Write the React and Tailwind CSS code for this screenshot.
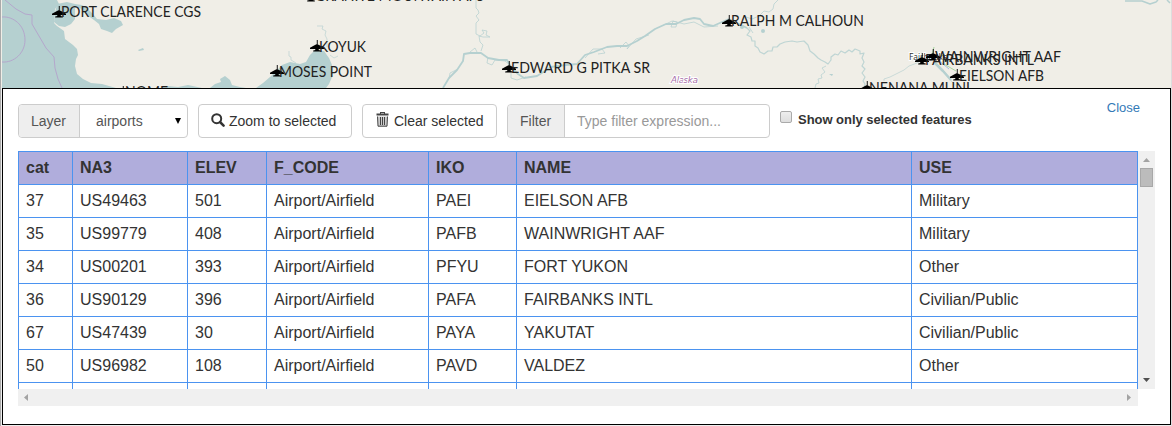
const columns = ['cat', 'NA3', 'ELEV', 'F_CODE', 'IKO', 'NAME', 'USE'];

const rows = [
  ['37', 'US49463', '501', 'Airport/Airfield', 'PAEI', 'EIELSON AFB', 'Military'],
  ['35', 'US99779', '408', 'Airport/Airfield', 'PAFB', 'WAINWRIGHT AAF', 'Military'],
  ['34', 'US00201', '393', 'Airport/Airfield', 'PFYU', 'FORT YUKON', 'Other'],
  ['36', 'US90129', '396', 'Airport/Airfield', 'PAFA', 'FAIRBANKS INTL', 'Civilian/Public'],
  ['67', 'US47439', '30', 'Airport/Airfield', 'PAYA', 'YAKUTAT', 'Civilian/Public'],
  ['50', 'US96982', '108', 'Airport/Airfield', 'PAVD', 'VALDEZ', 'Other'],
  ['', '', '', '', '', '', ''],
];

// x / y: centre of the plane marker; tx / ty: label origin; w: label width
const airports = [
  { name: 'PORT CLARENCE CGS', x: 59, y: 13, tx: 61, ty: 17, w: 140 },
  { name: 'GRANITE MOUNTAIN AFS', x: 311, y: -3, tx: 315, ty: 1, w: 169 },
  { name: 'KOYUK', x: 317, y: 47, tx: 319, ty: 52, w: 47 },
  { name: 'MOSES POINT', x: 277, y: 72, tx: 279, ty: 77, w: 93 },
  { name: 'NOME', x: 123, y: 93, tx: 125, ty: 97, w: 43 },
  { name: 'EDWARD G PITKA SR', x: 509, y: 68, tx: 511, ty: 73, w: 139 },
  { name: 'RALPH M CALHOUN', x: 729, y: 22, tx: 731, ty: 26, w: 133 },
  { name: 'NENANA MUNI', x: 867, y: 88, tx: 869, ty: 93, w: 101 },
  { name: 'FAIRBANKS INTL', x: 922, y: 60, tx: 925, ty: 65, w: 109 },
  { name: 'WAINWRIGHT AAF', x: 933, y: 56, tx: 935, ty: 62, w: 126 },
  { name: 'EIELSON AFB', x: 957, y: 76, tx: 959, ty: 81, w: 85 },
];

function MapView() {
  return (
    <svg className="block h-[88px] w-[1170px]" viewBox="1 0 1170 88">
      <rect x="1" width="1170" height="88" fill="#f0eee7" />
      <g fill="#b5d0d0">
        <path d="M2 0H57L59 4L55 9L54 23L57 26L64 31L65 39L73 45L77 49L78 55L76 59L75 66L77 74L83 79L91 83L102 84L116 88H2Z" />
        <path d="M57 4L67 2L75 4L82 5L88 9L93 14L97 19L106 20L114 18L121 21L123 25L116 29L112 33L107 31L101 29L99 24L94 20L87 15L80 8L75 8L75 19L71 24L65 27L59 26L54 22L55 13Z" />
        <path d="M160 88L168 86L178 87L188 85L202 88Z" />
        <path d="M215 84L221 82L220 79L225 76L230 80L232 85L240 87L246 88H210Z" />
        <path d="M256 88L263 83L270 77L277 70L282 65L290 62L300 64L306 62L310 55L314 51L324 51L329 58L332 65L332 77L329 84L326 88Z" />
        <circle cx="763" cy="31" r="2" />
        <circle cx="742" cy="27" r="2" />
        <path d="M138 50L143 48L144 50L139 51ZM829 74L833 74L832 76Z" />
      </g>
      <g fill="none" stroke="#b5d0d0" strokeLinejoin="round">
        <path strokeWidth="1.8" d="M443 88L449 78L457 70L463 61L464 54L470 53L481 53L488 58L499 60L507 60L511 67L518 74L524 78L537 76L551 67L566 65L577 64L585 55L594 52L607 47L617 46L627 46L637 41L645 36L655 29L666 24L676 24L684 20L694 18L700 19L704 24L713 26L722 22L729 19L739 24L747 28" />
        <path strokeWidth="1.2" strokeOpacity=".85" d="M747 28L750 31L747 35L751 37L752 41L755 41L755 46L758 48L760 52L764 54L768 51L772 51L773 47L777 47L780 44L785 42L792 41L797 42L804 41L808 45L810 51L814 54L818 58L821 60L825 62L828 64L831 60L831 57L835 54L838 55L841 51L845 53L849 50L852 52L855 49L860 51L860 54L864 53L862 58L864 62L862 66L865 69L862 73L865 77L863 81L865 84L864 88" />
        <path strokeOpacity=".75" d="M476 0V8L478 10L479 13L476 16L479 20L476 23V34L480 36L484 33L482 30L487 31L486 35L490 37L483 37L479 36L480 42L483 45L481 51M477 52L475 48L470 52M488 57L487 63L492 65L495 60L505 61L511 66L511 78L517 80L526 77M449 79L450 73L458 69" />
        <path strokeOpacity=".75" d="M778 0L774 4L773 9L769 12L764 11L759 16L752 19L746 17M749 27L753 33M666 24L672 21L677 22L676 27L671 27L673 21L684 24L694 22L704 27L718 26M585 58L593 49L602 49L605 53L598 54M620 48L626 42L629 46L627 49L636 39L649 35M826 66L822 68L825 72L821 75L822 78L818 79L819 83L816 84L815 88" />
        <path strokeOpacity=".65" d="M317 26L323 26L322 29L326 31L325 35L327 39V47M330 55L334 58L338 56M289 51L289 56L291 57L291 60L296 63M884 81V79L890 77L896 74L904 70L909 66L917 63L924 59L933 60L944 71L952 82L959 88" />
        <path strokeWidth="1.5" d="M1125 1L1142 1L1150 4L1156 2L1158 0M1167 0L1170 3" />
        <path strokeWidth="2.5" d="M935 63L943 71L951 80" />
      </g>
      <g fill="none" stroke="#b4a7cc">
        <path d="M5 0L16 9L25 14L32 15L32 24L39 36L46 48L54 57L55 68L58 79L62 88M2 17C13 16 25 25 25 40C25 53 14 63 2 62" />
      </g>
      <path d="M934 47L932 55M944 64L956 71" fill="none" stroke="#a9d5a2" />
      <path d="M938 60L949 69" fill="none" stroke="#a9bce0" />
      <text x="671" y="83" textLength="27" fontSize="9" fontStyle="italic" fontFamily="DejaVu Sans, sans-serif" fill="#a76fa9" stroke="#fff" strokeWidth="2" paintOrder="stroke">Alaska</text>
      <text x="909" y="59.5" textLength="38" fontSize="8.5" fontFamily="Noto Sans, sans-serif" fill="#333" stroke="#fff" strokeWidth="2" paintOrder="stroke">Fairbanks</text>
      {airports.map((a) => (
        <g key={a.name}>
          <path transform={`translate(${a.x} ${a.y})`} d="M-7 .8L-2.5 -1.8L0 -3L2.5 -1.8L7 .8V2H2L1.5 3L3.8 3.6V4.6H-3.8V3.6L-1.5 3L-2 2H-7ZM-.2 -7H.7V4.6H-.2Z" fill="#000" />
          <text x={a.tx} y={a.ty} textLength={a.w} lengthAdjust="spacingAndGlyphs" fontSize="16" fontFamily="Lato, sans-serif" fill="#222">{a.name}</text>
        </g>
      ))}
    </svg>
  );
}

function SearchIcon() {
  return (
    <svg className="-mt-[3px] h-3.5 w-3.5 shrink-0" viewBox="0 0 14 14">
      <circle cx="5.7" cy="5.7" r="4.5" fill="none" stroke="#333" strokeWidth="2" />
      <path d="M9 9L12.6 12.6" stroke="#333" strokeWidth="2.5" strokeLinecap="round" />
    </svg>
  );
}

function TrashIcon() {
  return (
    <svg className="-mt-[3px] h-[15px] w-3.5 shrink-0" viewBox="0 0 14 15">
      <path d="M4 0H9V1.5H12.5V3.5H.5V1.5H4ZM5 1V1.5H8V1Z" fill="#444" fillRule="evenodd" />
      <path d="M1.5 4.5L2 14.2H11L11.5 4.5" fill="#ccc" stroke="#444" />
      <path d="M4.5 5V13M6.5 5V13M8.5 5V13" stroke="#444" />
    </svg>
  );
}

function Toolbar() {
  return (
    <div className="flex h-[34px] text-sm text-[#333]">
      <div className="flex w-[170px] rounded border border-[#ccc]">
        <div className="flex w-[61px] items-center rounded-l border-r border-[#ccc] bg-[#eee] pl-3 text-[#555]">Layer</div>
        <div className="flex grow items-center justify-between pr-1.5 pl-4 text-[#555]">
          <span>airports</span>
          <svg className="h-1.5 w-1.5" viewBox="0 0 6 6"><path d="M0 0H6L3 6Z" fill="#000" /></svg>
        </div>
      </div>
      <button className="ml-2.5 flex w-[154px] items-center gap-1 rounded border border-[#ccc] pl-3 whitespace-nowrap">
        <SearchIcon />Zoom to selected
      </button>
      <button className="ml-2.5 flex w-[135px] items-center gap-1 rounded border border-[#ccc] pl-[13px] whitespace-nowrap">
        <TrashIcon />Clear selected
      </button>
      <div className="ml-2.5 flex w-[263px] rounded border border-[#ccc]">
        <div className="flex w-[57px] items-center rounded-l border-r border-[#ccc] bg-[#eee] pl-3 text-[#555]">Filter</div>
        <input className="w-0 grow rounded-r px-3 outline-none placeholder:text-[#999]" placeholder="Type filter expression..." />
      </div>
      <label className="ml-2.5 flex h-8 items-center text-[13px] font-bold tracking-[-0.04px] whitespace-nowrap">
        <span className="mr-1.5 -mt-1.5 h-3 w-3 rounded-xs border border-[#aaa] bg-linear-to-b from-[#eee] to-[#dedede]" />
        Show only selected features
      </label>
      <a className="-mt-1.5 ml-auto mr-[30px] text-[13px] leading-5 text-[#337ab7]">Close</a>
    </div>
  );
}

function AttributeTable() {
  const grid = 'grid h-[33px] grid-cols-[54px_115px_79px_162px_88px_395px_227px]';
  return (
    <div className="h-[238px] w-[1120px] overflow-hidden text-base">
      <div className={`${grid} bg-[#b0addc] font-bold`}>
        {columns.map((c) => (
          <div key={c} className="border-t border-l border-[#4b93f0] pl-[7px] leading-8 last:border-r">{c}</div>
        ))}
      </div>
      {rows.map((r, i) => (
        <div key={i} className={grid}>
          {r.map((v, j) => (
            <div key={j} className="border-t border-l border-[#4b93f0] pl-[7px] leading-8 last:border-r">{v}</div>
          ))}
        </div>
      ))}
    </div>
  );
}

export default function App() {
  return (
    <div className="h-[426px] w-[1172px] overflow-hidden border-r border-l border-r-[#ddd] border-l-[#aaa] bg-[#eee] font-['Liberation_Sans',Arial,sans-serif] text-[#333]">
      <MapView />
      <div className="ml-px h-[337px] w-[1169px] border border-black bg-white pt-[15px] pl-[15px]">
        <Toolbar />
        <div className="mt-[13px] flex">
          <AttributeTable />
          <div className="flex w-[17px] flex-col items-center bg-[#f0f0f0]">
            <svg className="mt-[7px] h-1 w-[7px]" viewBox="0 0 7 4"><path d="M0 4L3.5 0L7 4Z" fill="#a3a3a3" /></svg>
            <div className="mt-1.5 h-[19px] w-[13px] border border-[#a8a8a8] bg-[#bcbcbc]" />
            <svg className="mt-auto mb-[7px] h-1 w-[7px]" viewBox="0 0 7 4"><path d="M0 0L3.5 4L7 0Z" fill="#505050" /></svg>
          </div>
        </div>
        <div className="flex h-[17px] w-[1120px] items-center justify-between bg-[#f0f0f0] pr-[7px] pl-1.5">
          <svg className="h-[7px] w-1" viewBox="0 0 4 7"><path d="M4 0L0 3.5L4 7Z" fill="#a3a3a3" /></svg>
          <svg className="h-[7px] w-1" viewBox="0 0 4 7"><path d="M0 0L4 3.5L0 7Z" fill="#a3a3a3" /></svg>
        </div>
      </div>
    </div>
  );
}
